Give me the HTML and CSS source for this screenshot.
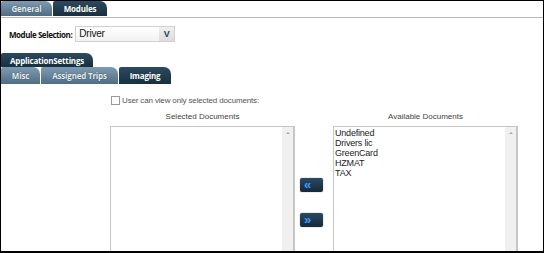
FILE: index.html
```html
<!DOCTYPE html>
<html lang="en">
<head>
    <meta charset="UTF-8">
    <title>Driver Modules</title>
    <link rel="stylesheet" href="styles.css">
</head>
<body>

<div class="frame">
    <!-- Top tabs -->
    <div class="tabs top-tabs">
        <div class="tab tab-general">General</div>
        <div class="tab tab-modules active">Modules</div>
    </div>

    <div class="module-row">
        <span class="module-label">Module Selection:</span>
        <div class="select">
            <span class="select-value">Driver</span>
            <span class="select-btn">V</span>
        </div>
    </div>

    <div class="tabs app-tabs">
        <div class="tab tab-app active">ApplicationSettings</div>
    </div>
    <div class="tabs sub-tabs">
        <div class="tab tab-misc">Misc</div>
        <div class="tab tab-trips">Assigned Trips</div>
        <div class="tab tab-imaging active">Imaging</div>
    </div>

    <div class="imaging">
        <label class="check-row">
            <span class="checkbox"></span>
            <span>User can view only selected documents:</span>
        </label>

        <div class="lists">
            <div class="list-col list-left">
                <div class="list-title">Selected Documents</div>
                <div class="listbox">
                    <div class="list-items"></div>
                    <div class="scrollbar"><span class="arrow-up"></span></div>
                </div>
            </div>

            <div class="mover">
                <button class="move-btn move-left">&laquo;</button>
                <button class="move-btn move-right">&raquo;</button>
            </div>

            <div class="list-col list-right">
                <div class="list-title">Available Documents</div>
                <div class="listbox">
                    <div class="list-items">
                        <div>Undefined</div>
                        <div>Drivers lic</div>
                        <div>GreenCard</div>
                        <div>HZMAT</div>
                        <div>TAX</div>
                    </div>
                    <div class="scrollbar"><span class="arrow-up"></span></div>
                </div>
            </div>
        </div>
    </div>
</div>

</body>
</html>
```

FILE: styles.css
```css
body {
    margin: 0;
    font-family: "Open Sans", "Liberation Sans", Arial, sans-serif;
    background: #fff;
}

.frame {
    width: 544px;
    height: 253px;
    box-sizing: border-box;
    border: 1px solid #000;
    border-bottom-width: 2px;
    overflow: hidden;
}

/* Tabs */
.tabs {
    display: flex;
}

.tab {
    box-sizing: border-box;
    color: #e8eef3;
    font-size: 8px;
    font-weight: bold;
    letter-spacing: -0.2px;
    text-align: center;
    background: linear-gradient(#7e9bb1, #4f6d84);
    border-radius: 2px 7px 0 0;
    text-shadow: 0 0 1px #233;
    margin-right: 1px;
}

.tab.active {
    background: linear-gradient(#2b4a61, #18303f);
    color: #fff;
}

.top-tabs {
    height: 16px;
    border-bottom: 1px solid #b9b9b9;
}

.top-tabs .tab {
    height: 15px;
    line-height: 15px;
}

.tab-general { width: 51px; }
.tab-modules { width: 54px; }

.module-row {
    display: flex;
    align-items: center;
    margin: 8px 0 0 8px;
    height: 16px;
}

.module-label {
    font-size: 8px;
    font-weight: bold;
    color: #111;
    letter-spacing: -0.45px;
    margin-right: 3px;
}

.select {
    display: flex;
    width: 100px;
    height: 16px;
    box-sizing: border-box;
    border: 1px solid #d0d0d0;
    background: linear-gradient(#fff, #f2f2f2);
}

.select-value {
    flex: 1;
    font-family: "Liberation Sans", Arial, sans-serif;
    font-size: 10px;
    letter-spacing: -0.2px;
    line-height: 14px;
    padding-left: 3px;
    color: #111;
}

.select-btn {
    width: 15px;
    background: linear-gradient(#f0f0f0, #dcdcdc);
    color: #24435a;
    font-family: "Liberation Sans", Arial, sans-serif;
    font-weight: bold;
    font-size: 9px;
    line-height: 14px;
    text-align: center;
}

.app-tabs {
    margin-top: 11px;
}

.tab-app {
    width: 92px;
    height: 14px;
    line-height: 15px;
}

.sub-tabs .tab {
    height: 17px;
    line-height: 17px;
}

.tab-misc { width: 39px; }
.tab-trips { width: 77px; }
.tab-imaging { width: 52px; }

/* Imaging panel */
.imaging {
    padding-left: 109px;
}

.check-row {
    display: flex;
    align-items: center;
    height: 11px;
    margin-top: 11px;
    font-family: "Liberation Sans", Arial, sans-serif;
    font-size: 8px;
    letter-spacing: -0.15px;
    color: #555;
}

.checkbox {
    width: 7px;
    height: 7px;
    border: 1px solid #999;
    background: #fff;
    margin-left: 1px;
    margin-right: 2px;
}

.lists {
    display: flex;
    margin-top: 5px;
}

.list-col {
    width: 185px;
}

.list-title {
    font-family: "Liberation Sans", Arial, sans-serif;
    font-size: 8px;
    color: #444;
    text-align: center;
    height: 12px;
    line-height: 12px;
    margin-bottom: 3px;
}

.listbox {
    display: flex;
    height: 140px;
    box-sizing: border-box;
    border: 1px solid #c6c6c6;
    border-right-width: 2px;
}

.list-items {
    flex: 1;
    font-family: "Liberation Sans", Arial, sans-serif;
    font-size: 9px;
    letter-spacing: -0.2px;
    line-height: 10px;
    color: #222;
    padding-left: 1px;
    padding-top: 1px;
}

.scrollbar {
    width: 11px;
    background: #f0f0f0;
    display: flex;
    justify-content: center;
    padding-top: 5px;
}

.arrow-up {
    width: 0;
    height: 0;
    border-left: 2px solid transparent;
    border-right: 2px solid transparent;
    border-bottom: 2px solid #a8a8a8;
}

.mover {
    width: 38px;
    box-sizing: border-box;
    padding: 67px 0 0 5px;
    display: flex;
    flex-direction: column;
    gap: 21px;
}

.move-btn {
    width: 23px;
    height: 14px;
    padding: 0;
    border: none;
    border-radius: 2px;
    background: linear-gradient(#2a4a60, #15293a);
    box-shadow: 0 0 1px #445;
    color: #3c9cff;
    font-family: "Liberation Sans", Arial, sans-serif;
    font-size: 13px;
    font-weight: bold;
    line-height: 12px;
    text-align: left;
    padding-left: 4px;
}
```
